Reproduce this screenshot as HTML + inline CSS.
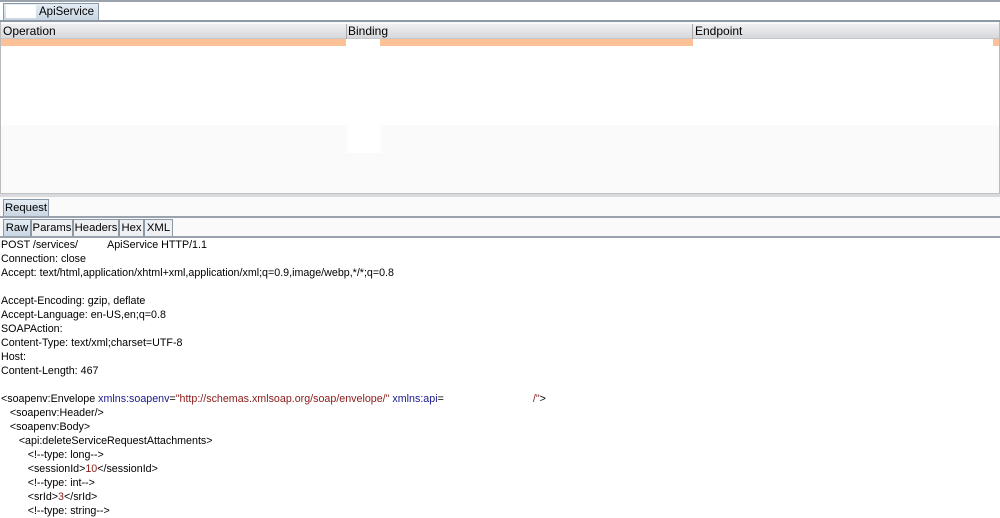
<!DOCTYPE html>
<html><head><style>
*{margin:0;padding:0;box-sizing:border-box}
body{width:1000px;height:515px;overflow:hidden;background:#fff;font-family:"Liberation Sans",Arial,sans-serif;font-size:12px;color:#000;position:relative}
.abs{position:absolute}
.tab{border:1px solid #8a99a8;border-bottom:none;background:linear-gradient(#e4ecf4,#c9d6e3);padding:0;text-align:center;line-height:15px;font-size:11.3px;white-space:nowrap;overflow:hidden}
.txt{font-size:10.7px}
.txt div{height:14px;line-height:14px;white-space:pre}
.b{color:#1a1a8c}.r{color:#8b1a1a}
</style></head><body>
<div class="abs" style="left:0;top:0;width:1000px;height:2px;background:#9aa2ad"></div>
<div class="abs tab" style="left:3px;top:3px;height:17px;width:96px;padding-left:35px;text-align:left;line-height:16px;font-size:11.5px">ApiService ·</div>
<div class="abs" style="left:6px;top:5px;width:30px;height:13px;background:#fff"></div>
<div class="abs" style="left:0;top:20px;width:1000px;height:2px;background:#8f99a6"></div>
<div class="abs" style="left:0;top:22px;width:1000px;height:172px;border-left:1px solid #bbb;border-right:1px solid #bbb;background:#fafafa"></div>
<div class="abs" style="left:1px;top:24px;width:998px;height:15px;background:linear-gradient(#f0f0f2,#d6d8dc);border-bottom:1px solid #c4c6ca"></div>
<div class="abs" style="left:3px;top:24px;line-height:15px">Operation</div>
<div class="abs" style="left:346px;top:24px;width:1px;height:15px;background:#aaa"></div>
<div class="abs" style="left:348px;top:24px;line-height:15px">Binding</div>
<div class="abs" style="left:692px;top:24px;width:1px;height:15px;background:#aaa"></div>
<div class="abs" style="left:695px;top:24px;line-height:15px">Endpoint</div>
<div class="abs" style="left:1px;top:39px;width:998px;height:86px;background:#fff"></div>
<div class="abs" style="left:1px;top:39px;width:345px;height:7px;background:#fcc196"></div>
<div class="abs" style="left:380px;top:39px;width:313px;height:7px;background:#fcc196"></div>
<div class="abs" style="left:993px;top:39px;width:6px;height:7px;background:#fcc196"></div>
<div class="abs" style="left:347px;top:125px;width:34px;height:28px;background:#fff"></div>
<div class="abs" style="left:0;top:193px;width:1000px;height:4px;background:#d8dadd;border-top:1px solid #c0c2c6"></div>
<div class="abs" style="left:0;top:197px;width:1000px;height:19px;background:#fafafa"></div>
<div class="abs tab" style="left:3px;top:199px;height:17px;width:46px;line-height:17px">Request</div>
<div class="abs" style="left:0;top:216px;width:1000px;height:2px;background:#9aa2ad"></div>
<div class="abs" style="left:0;top:218px;width:1000px;height:18px;background:#fafafa"></div>
<div class="abs tab" style="left:3px;top:219px;width:28px;height:17px;line-height:17px">Raw</div>
<div class="abs tab" style="left:31px;top:219px;width:42px;height:17px;line-height:17px;background:#eef0f3">Params</div>
<div class="abs tab" style="left:73px;top:219px;width:46px;height:17px;line-height:17px;background:#eef0f3">Headers</div>
<div class="abs tab" style="left:119px;top:219px;width:25px;height:17px;line-height:17px;background:#eef0f3">Hex</div>
<div class="abs tab" style="left:144px;top:219px;width:29px;height:17px;line-height:17px;background:#eef0f3">XML</div>
<div class="abs" style="left:0;top:236px;width:1000px;height:2px;background:#9aa2ad"></div>
<div class="abs txt" style="left:1px;top:238px">
<div>POST /services/          ApiService HTTP/1.1</div>
<div>Connection: close</div>
<div>Accept: text/html,application/xhtml+xml,application/xml;q=0.9,image/webp,*/*;q=0.8</div>
<div> </div>
<div>Accept-Encoding: gzip, deflate</div>
<div>Accept-Language: en-US,en;q=0.8</div>
<div>SOAPAction:</div>
<div>Content-Type: text/xml;charset=UTF-8</div>
<div>Host:</div>
<div>Content-Length: 467</div>
<div> </div>
<div>&lt;soapenv:Envelope <span class="b">xmlns:soapenv</span>=<span class="r">"http://schemas.xmlsoap.org/soap/envelope/"</span> <span class="b">xmlns:api</span>=                              <span class="r">/"</span>&gt;</div>
<div>   &lt;soapenv:Header/&gt;</div>
<div>   &lt;soapenv:Body&gt;</div>
<div>      &lt;api:deleteServiceRequestAttachments&gt;</div>
<div>         &lt;!--type: long--&gt;</div>
<div>         &lt;sessionId&gt;<span class="r">10</span>&lt;/sessionId&gt;</div>
<div>         &lt;!--type: int--&gt;</div>
<div>         &lt;srId&gt;<span class="r">3</span>&lt;/srId&gt;</div>
<div>         &lt;!--type: string--&gt;</div>
</div>
</body></html>
